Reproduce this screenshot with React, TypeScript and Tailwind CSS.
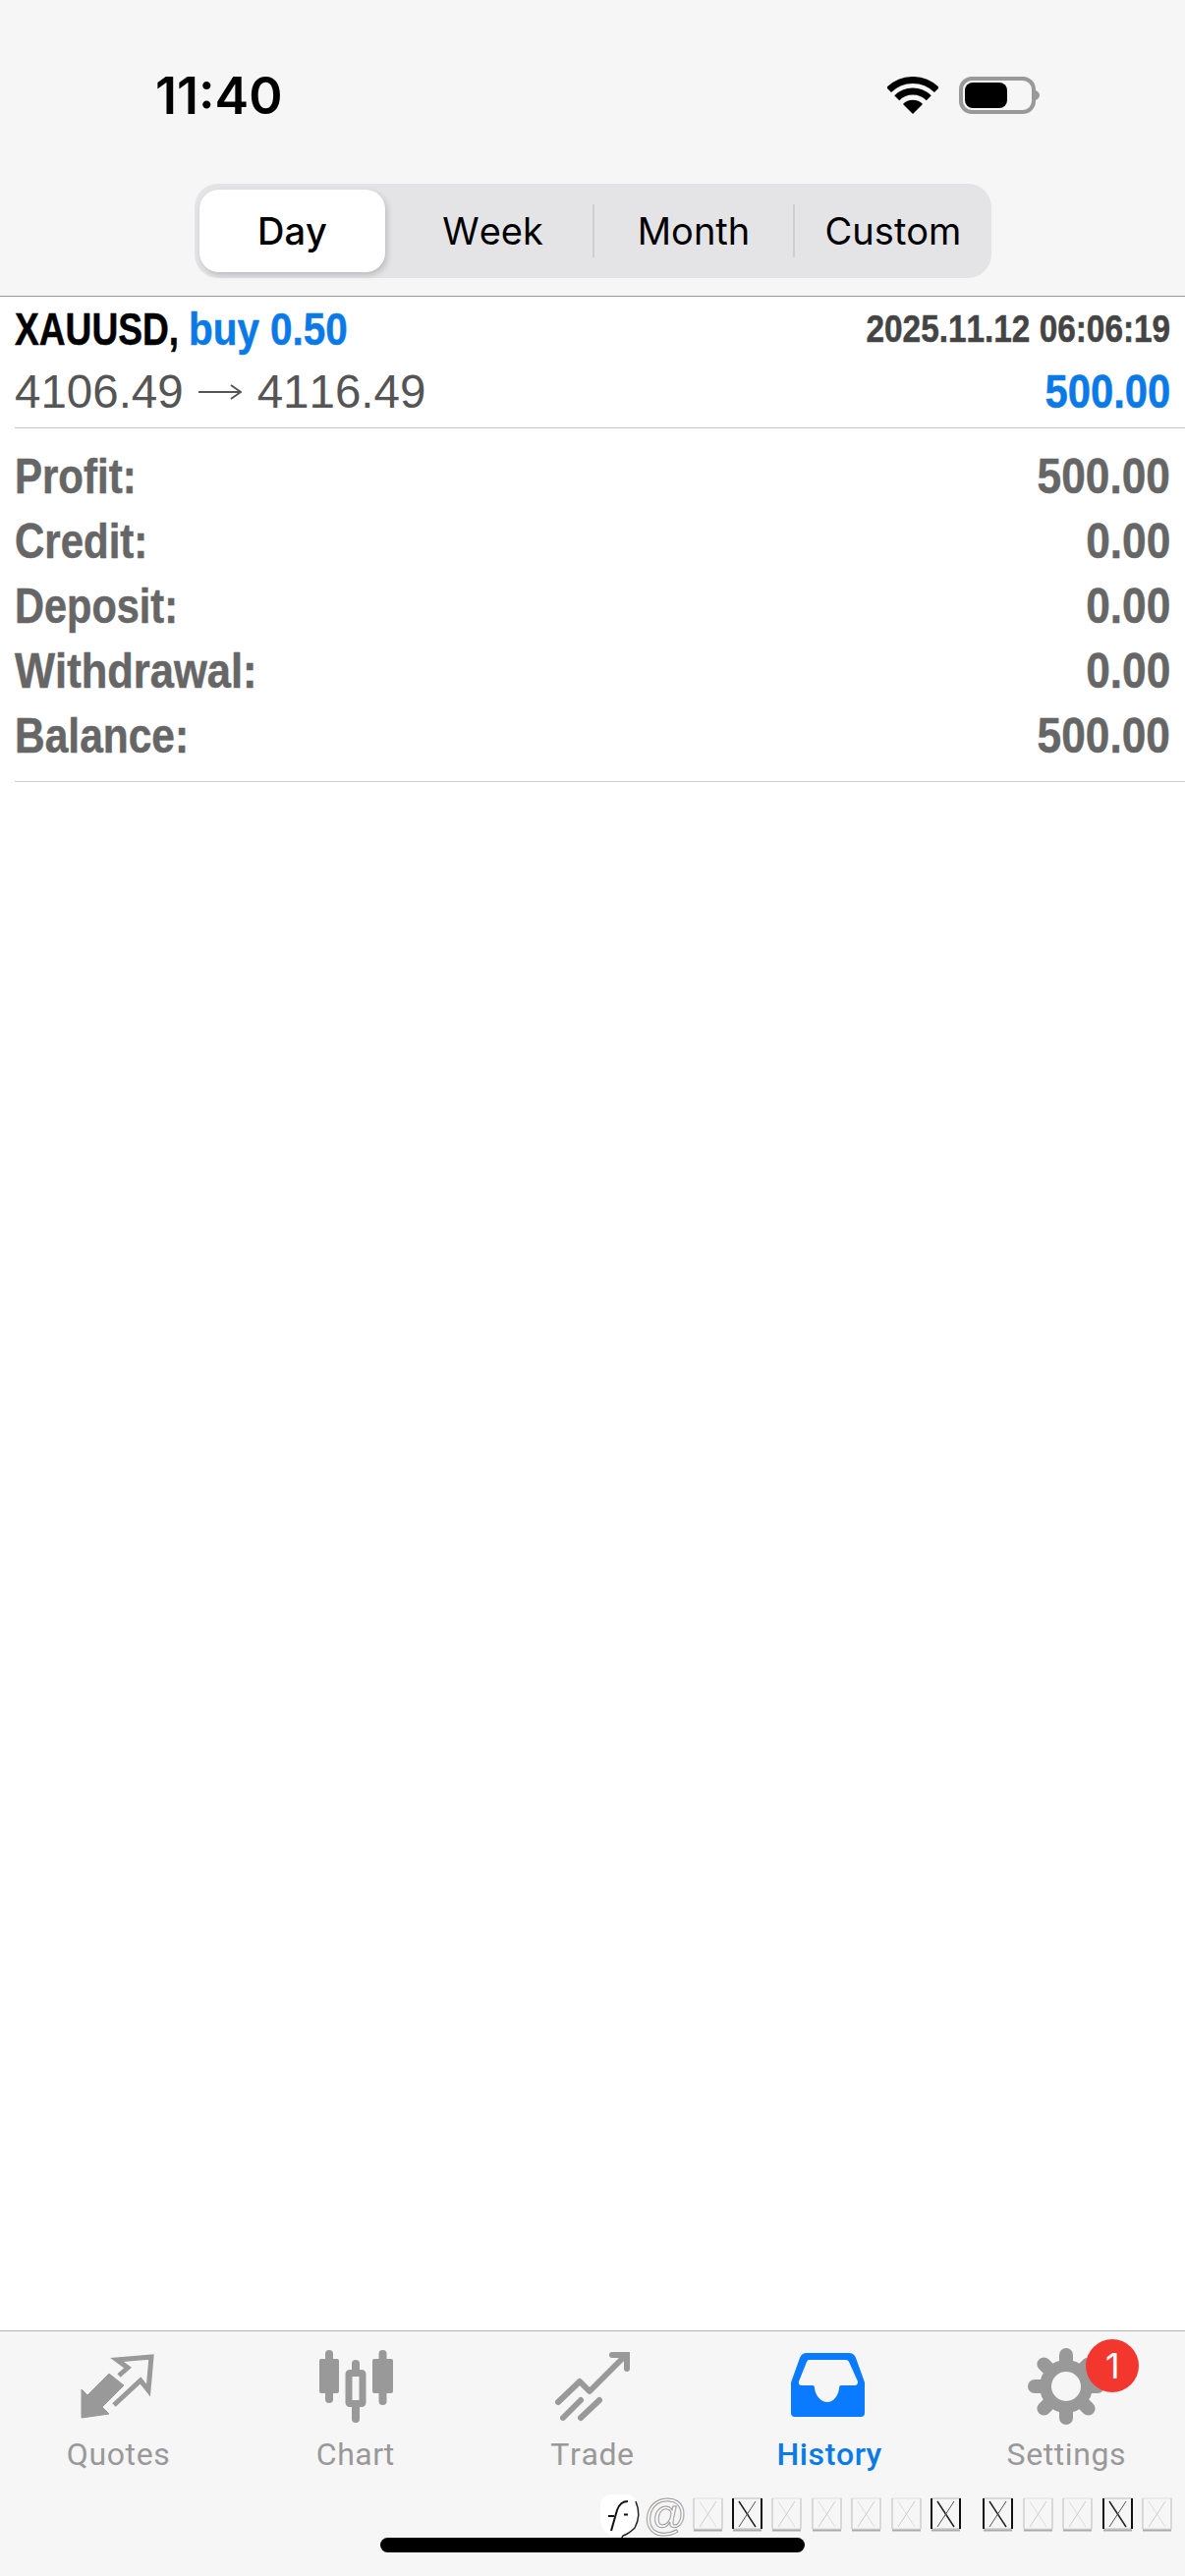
const segments = ['Day', 'Week', 'Month', 'Custom'];

const summary = [
  { label: 'Profit:', value: '500.00', labelClass: 'scale-x-[0.84]' },
  { label: 'Credit:', value: '0.00', labelClass: 'scale-x-[0.84]' },
  { label: 'Deposit:', value: '0.00', labelClass: 'scale-x-[0.83]' },
  { label: 'Withdrawal:', value: '0.00', labelClass: 'scale-x-[0.87]' },
  { label: 'Balance:', value: '500.00', labelClass: 'scale-x-[0.85]' },
];

function WifiIcon() {
  return (
    <svg width="52" height="38" viewBox="0 0 52 38" aria-hidden="true">
      <path d="M1.6 13.6 A34.5 34.5 0 0 1 50.4 13.6" fill="none" stroke="#000" strokeWidth="7" />
      <path d="M9.7 21.7 A23 23 0 0 1 42.3 21.7" fill="none" stroke="#000" strokeWidth="7" />
      <path d="M26 38 L16 28 A14 14 0 0 1 36 28 Z" fill="#000" />
    </svg>
  );
}

function BatteryIcon() {
  return (
    <svg width="84" height="38" viewBox="0 0 84 38" aria-hidden="true">
      <rect x="2" y="2" width="74" height="34" rx="11" fill="none" stroke="#999" strokeWidth="4" />
      <rect x="6" y="6" width="43" height="26" rx="8" fill="#000" />
      <path d="M78 14 Q82 16 82 19 Q82 22 78 24 Z" fill="#999" />
    </svg>
  );
}

function QuotesIcon() {
  return (
    <svg width="100" height="85" viewBox="0 0 100 85" aria-hidden="true">
      <path d="M12 76 V47 L18 53 L40 31 L55 43 L33 65 L40 72 Z" fill="#999" stroke="#999" strokeLinejoin="round" />
      <path d="M45 63 L72 38 L80 48 L83 14 L48 17 L59 25 L50 33" fill="none" stroke="#999" strokeWidth="5" />
    </svg>
  );
}

function ChartIcon() {
  return (
    <svg width="100" height="85" viewBox="0 0 100 85" aria-hidden="true">
      <g fill="#999">
        <rect x="13" y="16" width="20" height="35" rx="2" />
        <rect x="19" y="7" width="8" height="54" rx="4" />
        <rect x="46" y="17" width="8" height="64" rx="4" />
        <rect x="67" y="16" width="21" height="35" rx="2" />
        <rect x="73.5" y="7" width="8" height="56" rx="4" />
      </g>
      <rect x="43" y="30.5" width="14" height="31" rx="1" fill="#f6f6f6" stroke="#999" strokeWidth="7" />
    </svg>
  );
}

function TradeIcon() {
  return (
    <svg width="100" height="85" viewBox="0 0 100 85" aria-hidden="true">
      <g fill="none" stroke="#999" strokeLinecap="round">
        <path d="M15 60 L37 39 L47 49 L82 14" strokeWidth="6" strokeLinejoin="round" />
        <path d="M70 12 H85 V26" strokeWidth="6" />
        <path d="M20 76 L38 58" strokeWidth="6" />
        <path d="M38 76 L57 58" strokeWidth="6" />
      </g>
    </svg>
  );
}

function HistoryIcon() {
  return (
    <svg width="100" height="85" viewBox="0 0 100 85" aria-hidden="true">
      <path
        fillRule="evenodd"
        fill="#0a7aff"
        d="M27 10 H70 Q75 10 77 15 L86 40 V71 Q86 75 82 75 H15 Q11 75 11 71 V40 L20 15 Q22 10 27 10 Z M29 17 H67 Q69 17 70 19 L79 39 Q79 43 76 43 H62 Q60 43 60 46 C59 54 54 60 48 60 C42 60 36 54 35 46 Q35 43 33 43 H22 Q18 43 19 39 L27 19 Q28 17 29 17 Z"
      />
    </svg>
  );
}

function GearIcon() {
  return (
    <svg width="100" height="85" viewBox="0 0 100 85" aria-hidden="true">
      <g stroke="#999" strokeWidth="14" strokeLinecap="round">
        <path d="M50 12 V76" />
        <path d="M18 44 H82" />
        <path d="M27.4 21.4 L72.6 66.6" />
        <path d="M72.6 21.4 L27.4 66.6" />
      </g>
      <circle cx="50" cy="44" r="27" fill="#999" />
      <circle cx="50" cy="44" r="15" fill="#f6f6f6" />
    </svg>
  );
}

function TofuBox({ dark }: { dark?: boolean }) {
  const side = dark ? '#111' : '#c8c8c8';
  return (
    <svg width="32" height="36" viewBox="0 0 32 36" aria-hidden="true">
      <rect x="1" y="1" width="29" height="31" fill="none" stroke={dark ? '#bbb' : '#ddd'} />
      <path d="M1 1 V32 M30 1 V32" stroke={side} strokeWidth={dark ? 2 : 1} />
      <path d="M1 33.5 H30" stroke="#aaa" strokeWidth="2" />
      <path d="M7 4 L24 30" stroke={dark ? '#222' : '#ddd'} strokeWidth={dark ? 1.5 : 1} />
      <path d="M24 4 L7 30" stroke={dark ? '#555' : '#ccc'} />
    </svg>
  );
}

const tabs = [
  { label: 'Quotes', icon: <QuotesIcon /> },
  { label: 'Chart', icon: <ChartIcon /> },
  { label: 'Trade', icon: <TradeIcon /> },
  { label: 'History', icon: <HistoryIcon />, active: true },
  { label: 'Settings', icon: <GearIcon />, badge: '1' },
];

export default function App() {
  return (
    <div className="flex min-h-[2622px] w-full flex-col bg-white font-['Liberation_Sans',sans-serif] [font-kerning:none]">
      {/* Status bar + period switch */}
      <div className="h-[302px] border-b border-[#999] bg-[#f6f6f6]">
        <div className="flex h-[187px] items-start justify-between pl-[158px] pr-[146px] pt-[70px]">
          <span className="font-['Inter',sans-serif] text-[52px] leading-[56px] font-semibold text-black">11:40</span>
          <div className="flex items-start gap-[21px] pt-[8px]">
            <WifiIcon />
            <BatteryIcon />
          </div>
        </div>
        <div className="ml-[198px] grid h-[96px] w-[811px] grid-cols-[202px_203px_204px_202px] rounded-[24px] bg-[#e4e4e6] font-['Inter',sans-serif] text-[38px] text-black">
          {segments.map((s, i) => (
            <div key={s} className="flex items-center justify-center py-[6px]">
              {i === 0 ? (
                <div className="ml-[5px] mr-[8px] flex h-full w-full items-center justify-center rounded-[20px] bg-white font-medium shadow-[2px_3px_6px_rgba(0,0,0,0.18)]">
                  {s}
                </div>
              ) : (
                <div className={`flex h-[54px] w-full items-center justify-center ${i > 1 ? 'border-l-2 border-[#cfcfd1]' : ''}`}>
                  {s}
                </div>
              )}
            </div>
          ))}
        </div>
      </div>

      {/* Deal */}
      <div className="ml-[15px] border-b border-[#c4c4c4] pb-[5px] pr-[15px]">
        <div className="flex h-[66px] items-center justify-between whitespace-nowrap font-bold [-webkit-text-stroke:0.5px]">
          <div className="flex items-center text-[47px]">
            <span className="inline-block w-[177px] origin-left scale-x-[0.79] text-black">XAUUSD,</span>
            <span className="inline-block origin-left scale-x-[0.86] text-[#0a7ae8]">buy 0.50</span>
          </div>
          <span className="inline-block origin-right scale-x-[0.855] text-[39px] text-[#444]">2025.11.12 06:06:19</span>
        </div>
        <div className="flex h-[62px] items-center justify-between whitespace-nowrap text-[47.5px]">
          <div className="flex items-center text-[#555]">
            <span>4106.49</span>
            <svg className="ml-[15px] mr-[16px]" width="44" height="22" viewBox="0 0 44 22" aria-hidden="true">
              <path d="M0 11 H42 M33 4 L43 11 L33 18" fill="none" stroke="#555" strokeWidth="2" />
            </svg>
            <span>4116.49</span>
          </div>
          <span className="inline-block origin-right scale-x-[0.88] font-bold text-[#0a7ae8] [-webkit-text-stroke:0.5px]">500.00</span>
        </div>
      </div>

      {/* Summary */}
      <div className="ml-[15px] border-b border-[#cdcdcd] pb-[13px] pr-[15px] pt-[16px]">
        {summary.map((row) => (
          <div key={row.label} className="flex h-[66px] items-center justify-between whitespace-nowrap text-[50px] font-bold text-[#666] [-webkit-text-stroke:0.5px]">
            <span className={`inline-block origin-left ${row.labelClass}`}>{row.label}</span>
            <span className="inline-block origin-right scale-x-[0.885]">{row.value}</span>
          </div>
        ))}
      </div>

      <div className="flex-1" />

      {/* Tab bar */}
      <div className="relative h-[250px] border-t border-[#b5b5b5] bg-[#f6f6f6]">
        <div className="grid grid-cols-5 pt-[12px]">
          {tabs.map((tab) => (
            <div key={tab.label} className="flex flex-col items-center">
              <div className="relative h-[85px] w-[100px]">
                {tab.icon}
                {tab.badge && (
                  <span className="absolute left-[70px] top-[-4px] flex h-[54px] w-[54px] items-center justify-center rounded-full bg-[#f4372e] font-['Inter',sans-serif] text-[36px] text-white">
                    {tab.badge}
                  </span>
                )}
              </div>
              <span
                className={`mt-[8px] font-['Roboto',sans-serif] text-[32px] leading-[40px] tracking-[0.6px] ${
                  tab.active ? 'font-medium text-[#0a7ae8]' : 'text-[#999]'
                }`}
              >
                {tab.label}
              </span>
            </div>
          ))}
        </div>

        {/* Watermark over the bar */}
        <div className="absolute left-[610px] top-[165px] flex items-start">
          <div className="relative h-[44px] w-[44px]">
            <svg width="46" height="52" viewBox="0 0 46 52" aria-hidden="true">
              <path d="M12 1 H30 Q40 4 40 22 Q40 36 25 42 L14 43 Q1 40 1 24 V12 Q2 2 12 1 Z" fill="#fff" />
              <path d="M37 8 Q43 22 36 35 Q30 41 24 43 L20 50" fill="none" stroke="#222" strokeWidth="1.5" />
              <path d="M29 8 Q21 8 18 17 L12 38" fill="none" stroke="#111" strokeWidth="2" />
              <path d="M9 23 H15 M25 21.5 H29" fill="none" stroke="#111" strokeWidth="2" />
            </svg>
          </div>
          <span className="ml-[1px] mt-[-3px] text-[44px] leading-[50px] text-white [-webkit-text-stroke:1px_#999]">@</span>
          <div className="ml-[5px] mt-[4px] flex">
            {[false, true, false, false, false, false, true].map((dark, i) => (
              <div key={i} className="w-[40.4px]">
                <TofuBox dark={dark} />
              </div>
            ))}
            <div className="w-[13px]" />
            {[true, false, false, true, false].map((dark, i) => (
              <div key={i} className="w-[40.4px]">
                <TofuBox dark={dark} />
              </div>
            ))}
          </div>
        </div>

        <div className="absolute bottom-[24px] left-[387px] h-[15px] w-[432px] rounded-full bg-black" />
      </div>
    </div>
  );
}
